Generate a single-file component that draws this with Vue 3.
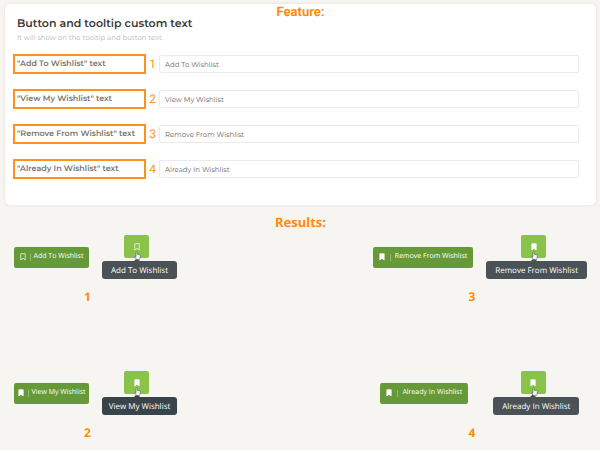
<script setup>
import { reactive } from 'vue'

const fields = reactive([
  { id: 'add', label: '"Add To Wishlist" text', value: 'Add To Wishlist' },
  { id: 'view', label: '"View My Wishlist" text', value: 'View My Wishlist' },
  { id: 'remove', label: '"Remove From Wishlist" text', value: 'Remove From Wishlist' },
  { id: 'already', label: '"Already In Wishlist" text', value: 'Already In Wishlist' },
])

const columns = [
  {
    compact: true,
    items: [
      { n: 1, text: 'Add To Wishlist', filled: false },
      { n: 2, text: 'View My Wishlist', filled: true, dark: true },
    ],
  },
  {
    compact: false,
    items: [
      { n: 3, text: 'Remove From Wishlist', filled: true },
      { n: 4, text: 'Already In Wishlist', filled: true, spread: true },
    ],
  },
]
</script>

<template>
  <main class="page">
    <section class="card">
      <h2 class="feature">Feature:</h2>
      <h1 class="title">Button and tooltip custom text</h1>
      <p class="hint">It will show on the tooltip and button text.</p>
      <div class="fields">
        <div v-for="(f, i) in fields" :key="f.id" class="field">
          <label class="label" :for="f.id">{{ f.label }}</label>
          <span class="step">{{ i + 1 }}</span>
          <input :id="f.id" v-model="f.value" class="input" type="text" />
        </div>
      </div>
    </section>

    <h2 class="results-title">Results:</h2>
    <section class="results">
      <div v-for="(column, c) in columns" :key="c" class="column" :class="{ compact: column.compact }">
        <div v-for="item in column.items" :key="item.n" class="result">
          <div class="demo" :class="{ spread: item.spread }">
            <button class="wish" type="button">
              <svg class="mark" viewBox="0 0 6 8">
                <path d="M.8.7h4.4v6.2L3 5.4.8 6.9z" :class="{ solid: item.filled }" />
              </svg>
              <span class="divider"></span>
              <span>{{ item.text }}</span>
            </button>
            <div class="stack">
              <button class="icon-button" type="button" :aria-label="item.text">
                <svg class="mark" viewBox="0 0 6 8">
                  <path d="M.8.7h4.4v6.2L3 5.4.8 6.9z" :class="{ solid: item.filled }" />
                </svg>
                <svg class="hand" viewBox="0 0 7 9">
                  <path d="M2 4.8V1.2q.6-1 1.2 0v2l2.5.6q.8.3.7 1.2L6 7.2 5.5 8.6h-3L.6 5.5q.2-1 1.4.2z" />
                </svg>
              </button>
              <div class="tooltip" :class="{ dark: item.dark }" role="tooltip">{{ item.text }}</div>
            </div>
          </div>
          <p class="number">{{ item.n }}</p>
        </div>
      </div>
    </section>
  </main>
</template>

<style>
body {
  margin: 0;
  background: #fff;
}
</style>

<style scoped>
.page {
  box-sizing: border-box;
  padding: 4px 4px 8px 5px;
  background: #f7f5f1;
  font-family: "Open Sans", "Noto Sans", sans-serif;
  text-rendering: geometricPrecision;
}
h1, h2, p {
  margin: 0;
}
.card {
  position: relative;
  padding: 12px 17px 26px 8px;
  background: #fff;
  border-radius: 5px;
  box-shadow: 0 0 2px 1px #ede8e1;
  font-family: Montserrat, Inter, sans-serif;
}
.feature {
  position: absolute;
  top: 1px;
  left: 0;
  right: 0;
  font: 700 13px/16px Roboto, sans-serif;
  text-align: center;
  color: #ff8a12;
}
.title {
  padding-left: 4px;
  font-size: 11px;
  line-height: 14px;
  font-weight: 600;
  color: #3c3a36;
}
.hint {
  padding-left: 4px;
  font-size: 7px;
  line-height: 16px;
  color: #bbb5af;
}
.fields {
  display: grid;
  gap: 15px;
  margin-top: 8px;
}
.field {
  display: flex;
  align-items: center;
}
.label {
  box-sizing: border-box;
  flex: 0 0 133px;
  height: 20px;
  padding-left: 2px;
  border: 2px solid #ff921f;
  font-size: 8px;
  line-height: 17px;
  font-weight: 600;
  white-space: nowrap;
  color: #7d746b;
}
.step {
  flex: 0 0 13px;
  font: 400 12px/16px Roboto, sans-serif;
  text-align: center;
  color: #ff921f;
}
.input {
  box-sizing: border-box;
  flex: 1;
  min-width: 0;
  height: 18px;
  padding: 0 5px;
  border: 1px solid #ebebeb;
  border-radius: 2px;
  background: #fff;
  font: 400 7px/16px Montserrat, Inter, sans-serif;
  text-rendering: geometricPrecision;
  color: #67655f;
}
.results-title {
  margin-top: 8px;
  font: 700 13px/18px "Noto Sans", sans-serif;
  text-align: center;
  color: #ff8a12;
}
.results {
  display: flex;
  justify-content: space-between;
  padding: 4px 9px 0;
}
.column {
  display: grid;
  gap: 65px;
}
.demo {
  display: flex;
  align-items: center;
  justify-content: center;
  gap: 13px;
}
.demo.spread {
  gap: 25px;
}
.wish {
  display: flex;
  align-items: center;
  justify-content: center;
  box-sizing: border-box;
  height: 21px;
  padding: 0 6px;
  border: 0;
  border-radius: 2px;
  background: #669a38;
  font: 400 7px/12px "Open Sans", "Noto Sans", sans-serif;
  text-rendering: geometricPrecision;
  white-space: nowrap;
  color: #fff;
}
.mark {
  display: block;
  width: 6px;
  height: 8px;
}
.mark path {
  fill: none;
  stroke: #fff;
  stroke-width: 0.7;
}
.mark .solid {
  fill: #fff;
}
.divider {
  width: 1px;
  height: 7px;
  margin: 0 4px 0 5px;
  background: #94b875;
}
.stack {
  display: flex;
  flex-direction: column;
  align-items: center;
  gap: 3px;
}
.icon-button {
  position: relative;
  display: flex;
  align-items: center;
  justify-content: center;
  width: 25px;
  height: 23px;
  margin-right: 6px;
  padding: 0;
  border: 0;
  border-radius: 2px;
  background: #89c349;
}
.hand {
  position: absolute;
  left: 10px;
  top: 16px;
  z-index: 1;
  width: 7px;
  height: 9px;
}
.hand path {
  fill: #f4f4f4;
  stroke: #586058;
  stroke-width: 0.6;
}
.tooltip {
  position: relative;
  box-sizing: border-box;
  height: 18px;
  padding: 0 9px;
  border-radius: 3px;
  background: #4a5257;
  font-size: 8px;
  line-height: 19px;
  text-align: center;
  white-space: nowrap;
  color: #fff;
}
.tooltip::before {
  content: "";
  position: absolute;
  left: 50%;
  bottom: 100%;
  margin-left: -6px;
  border: 3px solid transparent;
  border-top: 0;
  border-bottom-color: #4a5257;
}
.tooltip.dark {
  background: #39444a;
}
.tooltip.dark::before {
  border-bottom-color: #39444a;
}
.compact .wish,
.compact .tooltip {
  width: 75px;
  padding: 0;
}
.compact .divider {
  margin: 0 3px 0 4px;
}
.number {
  margin: 9px 16px 0 0;
  padding-bottom: 1px;
  font: 700 12px/17px "Noto Sans", sans-serif;
  text-align: center;
  color: #ff8a12;
}
</style>
